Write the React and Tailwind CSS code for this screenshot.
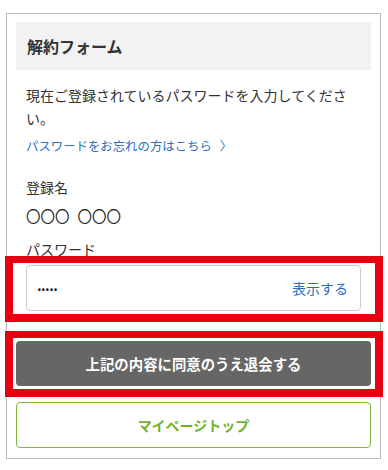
export default function App() {
  return (
    <div
      className="relative w-[388px] h-[470px] bg-white text-[#333]"
      style={{ fontFamily: '"Noto Sans CJK JP", "Noto Sans", sans-serif' }}
    >
      {/* 解約フォーム */}
      <div className="absolute left-[6px] top-[13px] w-[375px] border border-[#bbb] px-[9px] pt-[8px] pb-[10px]">
        <div className="h-[48px] bg-[#f2f2f2] px-[11px] flex items-center text-[16px] font-bold text-[#333]">
          解約フォーム
        </div>

        <div className="px-[10px]">
          <p className="mt-[14px] text-[14px] leading-[23px]">
            現在ご登録されているパスワードを入力してください。
          </p>
          <a href="#" className="block mt-[6px] text-[12.4px] leading-[20px] text-[#2d6fbe]">
            パスワードをお忘れの方はこちら
            <span className="inline-block ml-[8px]">〉</span>
          </a>

          <div className="mt-[21px] text-[14px] leading-[20px]">登録名</div>
          <div className="mt-[8px] text-[14.5px] leading-[22px] text-[#222]">
            <span>〇〇〇</span>
            <span className="ml-[8px]">〇〇〇</span>
          </div>

          <div className="mt-[12px] text-[14px] leading-[20px]">パスワード</div>
          <div className="mt-[6px] h-[46px] border border-[#ccc] rounded-[4px] flex items-center justify-between pl-[10px] pr-[12px]">
            <span className="text-[14px] font-bold tracking-[-0.5px] text-[#222] -mt-[6px]">.....</span>
            <button className="text-[14px] text-[#2d6fbe]">表示する</button>
          </div>
        </div>

        <button className="mt-[30px] w-full h-[45px] rounded-[4px] bg-[#666] text-white text-[14.4px] font-bold">
          上記の内容に同意のうえ退会する
        </button>
        <button className="mt-[16px] w-full h-[46px] rounded-[4px] border border-[#7ab83c] text-[#6fb32e] text-[14px] font-bold">
          マイページトップ
        </button>
      </div>

      {/* 赤枠 */}
      <div className="absolute left-[5px] top-[256px] w-[378px] h-[66px] border-[8px] border-t-[7px] border-[#e60012]"></div>
      <div className="absolute left-[5px] top-[331px] w-[378px] h-[66px] border-[8px] border-t-[7px] border-[#e60012]"></div>
    </div>
  );
}
